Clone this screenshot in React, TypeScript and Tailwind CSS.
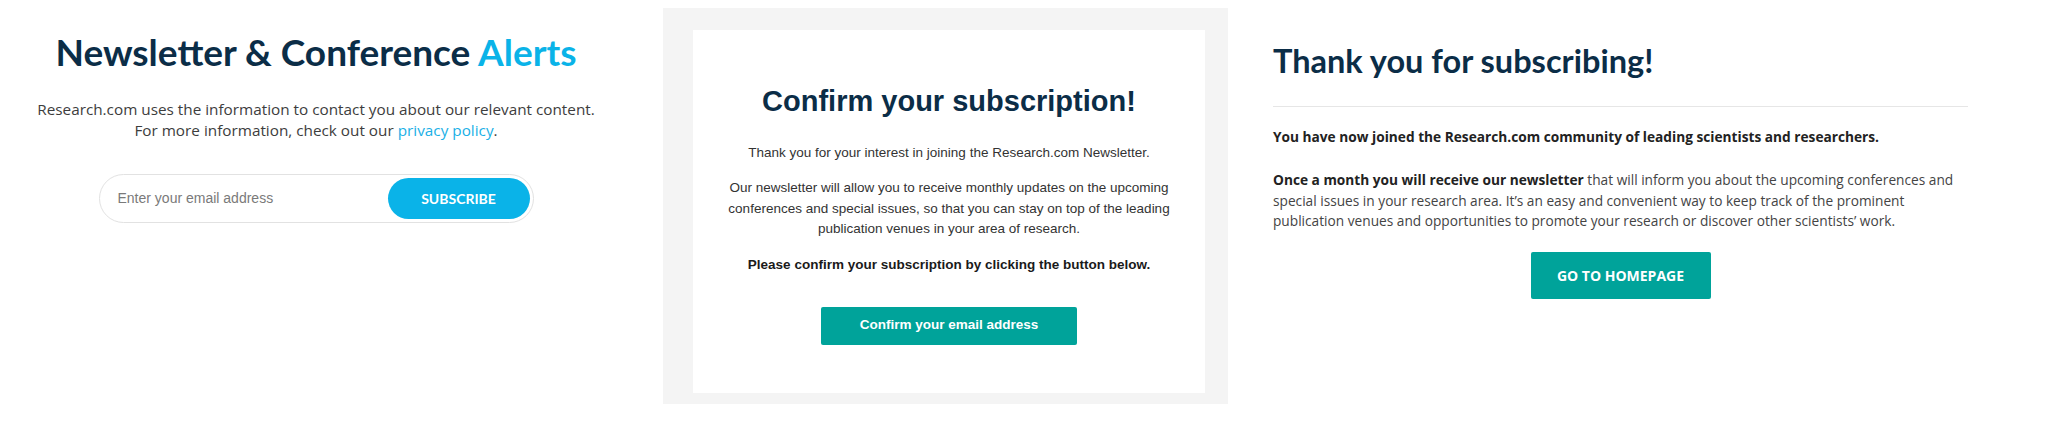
import React from "react";

const heading = { fontFamily: "Lato, 'Noto Sans', sans-serif" };
const openSans = { fontFamily: "'Open Sans', 'Noto Sans', sans-serif" };
const arial = { fontFamily: "'Liberation Sans', Arial, sans-serif" };

export default function App() {
  return (
    <div className="flex h-[423px] w-[2048px] bg-white overflow-hidden">
      {/* Left: newsletter signup */}
      <div className="flex w-[632px] shrink-0 flex-col items-center pt-[29px]">
        <h1
          className="text-[37px] leading-[46px] font-bold text-[#0b2d47] whitespace-nowrap"
          style={heading}
        >
          Newsletter &amp; Conference <span className="text-[#0ab3e8]">Alerts</span>
        </h1>
        <p
          className="mt-[24px] text-center text-[15.3px] leading-[21px] text-[#3d3d3d] whitespace-nowrap"
          style={openSans}
        >
          Research.com uses the information to contact you about our relevant content.
          <br />
          For more information, check out our{" "}
          <a className="text-[#1ab0e6]">privacy policy</a>.
        </p>
        <div className="mt-[33px] flex h-[49px] w-[435px] items-center justify-between rounded-full border border-[#e2e2e2] pl-[18px] pr-[3px]">
          <span className="text-[14px] text-[#7a7a7a]" style={arial}>
            Enter your email address
          </span>
          <button
            className="flex h-[41px] w-[142px] items-center justify-center rounded-full bg-[#0ab3e8] text-[14px] font-bold text-white"
            style={heading}
          >
            SUBSCRIBE
          </button>
        </div>
      </div>

      {/* Middle: confirm email */}
      <div className="ml-[31px] mt-[8px] h-[396px] w-[565px] shrink-0 bg-[#f4f4f4] pl-[30px] pr-[23px] pt-[22px] pb-[11px]">
        <div className="flex h-full flex-col items-center bg-white pt-[55px]" style={arial}>
          <h2 className="text-[29px] leading-[33px] font-bold text-[#0b2d47]">
            Confirm your subscription!
          </h2>
          <p className="mt-[25px] text-[13.5px] leading-[20px] text-[#333]">
            Thank you for your interest in joining the Research.com Newsletter.
          </p>
          <p className="mt-[15px] text-center text-[13.5px] leading-[20.5px] text-[#333] whitespace-nowrap">
            Our newsletter will allow you to receive monthly updates on the upcoming
            <br />
            conferences and special issues, so that you can stay on top of the leading
            <br />
            publication venues in your area of research.
          </p>
          <p className="mt-[15px] text-[13.5px] leading-[20px] font-bold text-[#1a1a1a]">
            Please confirm your subscription by clicking the button below.
          </p>
          <button className="mt-[32px] flex h-[38px] w-[256px] items-center justify-center rounded-[2px] bg-[#00a39a] text-[13.5px] font-bold text-white">
            Confirm your email address
          </button>
        </div>
      </div>

      {/* Right: thank you */}
      <div className="flex w-[820px] shrink-0 flex-col pl-[45px] pt-[41px]">
        <div className="flex w-[695px] flex-col">
          <h2
            className="text-[32.5px] leading-[40px] font-bold text-[#0b2d47]"
            style={heading}
          >
            Thank you for subscribing!
          </h2>
          <div className="mt-[25px] h-px w-full bg-[#e6e6e6]" />
          <div style={openSans} className="whitespace-nowrap">
            <p className="mt-[20px] text-[13.7px] leading-[20px] font-bold text-[#222]">
              You have now joined the Research.com community of leading scientists and researchers.
            </p>
            <p className="mt-[23px] text-[13.7px] leading-[20.5px] text-[#444]">
              <span className="font-bold text-[#222]">Once a month you will receive our newsletter</span>{" "}
              that will inform you about the upcoming conferences and
              <br />
              special issues in your research area. It’s an easy and convenient way to keep track of the prominent
              <br />
              publication venues and opportunities to promote your research or discover other scientists’ work.
            </p>
          </div>
          <div className="mt-[20px] flex justify-center">
            <button
              className="flex h-[47px] w-[180px] items-center justify-center rounded-[2px] bg-[#00a39a] text-[14px] font-bold text-white"
              style={openSans}
            >
              GO TO HOMEPAGE
            </button>
          </div>
        </div>
      </div>
    </div>
  );
}
